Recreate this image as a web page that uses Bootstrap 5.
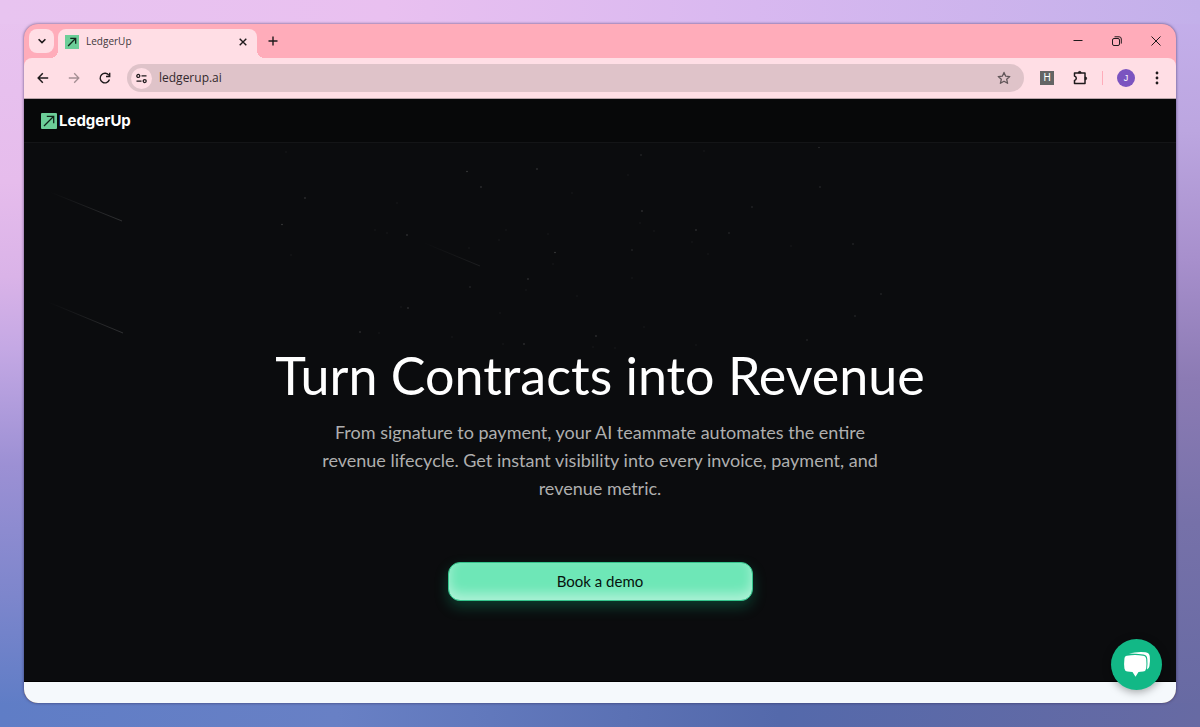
<!DOCTYPE html>
<html lang="en">
<head>
<meta charset="utf-8">
<meta name="viewport" content="width=device-width, initial-scale=1">
<title>LedgerUp</title>
<link href="https://cdn.jsdelivr.net/npm/bootstrap@5.3.0/dist/css/bootstrap.min.css" rel="stylesheet">
<style>
  body {
    font-family: "Open Sans", sans-serif;
    background:
      linear-gradient(90deg, #e8c4f0 0%, #e9c0f0 32%, #d8b8f0 63%, #c3b0ea 100%) top / 100% 24px no-repeat,
      linear-gradient(90deg, #5f7dc6 0%, #6880c5 28%, #5469ab 65%, #676aa3 100%) bottom / 100% 24px no-repeat,
      linear-gradient(180deg, #e8c4f0 0%, #e6bcec 25%, #dab3e8 38%, #c4a8e4 48%, #9c90d4 64%, #7d86cc 82%, #5f7dc6 97%) left / 50% 100% no-repeat,
      linear-gradient(180deg, #c5b0ec 0%, #bca6e0 18%, #a78fcc 36%, #8c7bb4 52%, #7671a9 72%, #676aa3 97%) right / 50% 100% no-repeat;
  }
  .browser { border-radius: 14px; box-shadow: 0 0 3px rgba(40, 30, 70, .7); background: #ffacba; }
  .plain { background: none; border: 0; padding: 0; line-height: 0; color: #1f1a1c; }
  .tab-strip { padding: 5px 8px 0 5px; height: 34px; gap: 4px; }
  .tab-menu { width: 25px; height: 24px; border-radius: 8px; background: #ffdee5; }
  .page-tab { width: 199px; height: 29px; border-radius: 8px 8px 0 0; background: #ffdee5; color: #40373a; font-size: 10px; padding: 0 8px 4px 7px; gap: 7px; }
  .page-tab::before, .page-tab::after { content: ""; position: absolute; bottom: 0; width: 8px; height: 8px; }
  .page-tab::before { right: 100%; background: radial-gradient(circle at 0 0, transparent 8px, #ffdee5 8px); }
  .page-tab::after { left: 100%; background: radial-gradient(circle at 100% 0, transparent 8px, #ffdee5 8px); }
  .win-btn { width: 24px; height: 24px; }
  .win-btns { gap: 15px; }
  .tool-row { height: 41px; padding: 0 11px; background: #ffdee5; border-bottom: 1px solid #b9a4a9; border-radius: 8px 8px 0 0; }
  .nav-btns { gap: 15px; margin-right: 14px; }
  .tool-btns { gap: 14px; margin-left: 16px; }
  .address { height: 28px; background: #dfc3c9; padding: 0 12px 0 4px; }
  .site-info { width: 21px; height: 21px; background: #ffdee5; }
  .address input { font-size: 12px; line-height: 16px; color: #33292d; background: none; outline: 0; margin-left: 7px; }
  .ext { width: 14px; height: 14px; background: #646464; color: #fff; font: 10px/14px "Liberation Sans", sans-serif; }
  .split { width: 1px; height: 14px; background: #ffacba; }
  .profile { width: 18px; height: 18px; background: #7b54c0; color: #fff; font: 9px/18px "Liberation Sans", sans-serif; }
  .site { background: #0b0c0e; }
  .site-head { height: 44px; background: #070809; border-bottom: 1px solid #141517; padding: 0 17px; }
  .brand-link { font: 700 15px/20px Inter, sans-serif; color: #fff; gap: 2px; }
  .sky { position: absolute; left: 0; top: 0; width: 100%; }
  .hero { font-family: Lato, sans-serif; padding: 200px 24px 0; border-bottom: 1px solid #000; }
  .hero h1 { font-size: 52px; line-height: 64px; font-weight: 400; color: #fff; margin-bottom: 11px; }
  .hero p { font-size: 18px; line-height: 28px; color: #afafaf; max-width: 576px; margin-bottom: 60px; }
  .demo { width: 305px; max-width: 100%; height: 39px; border-radius: 12px; font-size: 15px; color: #07120d; background: #6ee7b7; border: 1px solid #34c48c; box-shadow: 0 6px 14px rgba(16, 185, 129, .28), inset 0 -6px 12px rgba(255, 255, 255, .45); }
  .next-band { height: 21px; background: #f5f9fc; }
  .chat { position: absolute; right: 14px; bottom: 13px; width: 51px; height: 51px; background: #12b886; box-shadow: 0 2px 8px rgba(0, 0, 0, .35); }
</style>
</head>
<body>
<div class="p-4 min-vh-100 d-flex flex-column">
  <div class="browser position-relative flex-fill overflow-hidden d-flex flex-column">

    <div class="tab-strip d-flex align-items-start">
      <button class="plain tab-menu" type="button" aria-label="Search tabs">
        <svg width="12" height="12" viewBox="0 0 12 12" fill="none" stroke="currentColor" stroke-width="1.6"><path d="M2.6 4.2 6 7.600l3.400-3.400"/></svg>
      </button>
      <div class="page-tab position-relative d-flex align-items-center">
        <svg width="14" height="14" viewBox="0 0 16 16"><path fill="#6cce98" d="M0 0h16v16H0z"/><path d="M3.500 12.500 12 4M6 3.800h6.200V10" fill="none" stroke="#10251a" stroke-width="1.5"/></svg>
        <span class="flex-fill">LedgerUp</span>
        <button class="plain" type="button" aria-label="Close tab">
          <svg width="12" height="12" viewBox="0 0 12 12" fill="none" stroke="currentColor" stroke-width="1.4"><path d="m2.700 2.700 6.600 6.600M9.300 2.700 2.700 9.300"/></svg>
        </button>
      </div>
      <button class="plain win-btn me-auto" type="button" aria-label="New tab">
        <svg width="12" height="12" viewBox="0 0 12 12" fill="none" stroke="currentColor" stroke-width="1.4"><path d="M6 1.500v9M1.500 6h9"/></svg>
      </button>
      <div class="win-btns d-flex">
        <button class="plain win-btn" type="button" aria-label="Minimize"><svg width="12" height="12" viewBox="0 0 12 12" stroke="currentColor"><path d="M1.500 5.500h9"/></svg></button>
        <button class="plain win-btn" type="button" aria-label="Restore"><svg width="12" height="12" viewBox="0 0 12 12" fill="none" stroke="currentColor"><rect x="1.500" y="3.500" width="7" height="7" rx="1.500"/><path d="M3.500 1.800h4.600a2.200 2.200 0 0 1 2.200 2.200v4.600"/></svg></button>
        <button class="plain win-btn" type="button" aria-label="Close"><svg width="12" height="12" viewBox="0 0 12 12" stroke="currentColor"><path d="m1.500 1.500 9 9M10.500 1.500l-9 9"/></svg></button>
      </div>
    </div>

    <div class="tool-row d-flex align-items-center">
      <div class="nav-btns d-flex">
        <button class="plain" type="button" aria-label="Back"><svg width="16" height="16" viewBox="0 0 16 16" fill="none" stroke="currentColor" stroke-width="1.5"><path d="M13.200 8H3.500M7.800 3.300 3.200 8l4.600 4.700"/></svg></button>
        <button class="plain" type="button" aria-label="Forward"><svg width="16" height="16" viewBox="0 0 16 16" fill="none" stroke="#a58f94" stroke-width="1.3"><path d="M2.800 8h9.700M8.200 3.300 12.800 8l-4.600 4.700"/></svg></button>
        <button class="plain" type="button" aria-label="Reload"><svg width="16" height="16" viewBox="0 0 16 16" fill="none" stroke="currentColor" stroke-width="1.4"><path d="M12.500 9.600A4.800 4.800 0 1 1 12 5.400"/><path d="M12.700 2.800v3.700H9"/></svg></button>
      </div>
      <div class="address rounded-pill flex-fill d-flex align-items-center">
        <button class="plain site-info rounded-circle" type="button" aria-label="Site information">
          <svg width="13" height="13" viewBox="0 0 13 13" fill="none" stroke="currentColor" stroke-width="1.3"><circle cx="3.300" cy="3.900" r="1.500"/><path d="M6.500 3.900h5M1.500 9.100h5"/><circle cx="9.700" cy="9.100" r="1.500"/></svg>
        </button>
        <input class="border-0 p-0 flex-fill" type="text" value="ledgerup.ai" aria-label="Address">
        <button class="plain" type="button" aria-label="Bookmark">
          <svg width="16" height="16" viewBox="0 0 16 16" fill="none" stroke="#62575a" stroke-width="1.3" stroke-linejoin="round"><path d="m8 2.400 1.700 3.800 4.100.4-3.100 2.700.9 4L8 11.200l-3.600 2.100.9-4-3.100-2.700 4.100-.4z"/></svg>
        </button>
      </div>
      <div class="tool-btns d-flex align-items-center">
        <button class="plain ext" type="button" aria-label="H extension">H</button>
        <button class="plain ms-1" type="button" aria-label="Extensions">
          <svg width="16" height="16" viewBox="0 0 16 16" fill="none" stroke="currentColor" stroke-width="1.5" stroke-linejoin="round"><path d="M2.500 3h10.500v10.500H2.500v-3q1.800-.5 1.800-2.200T2.500 6z"/><path d="M6.300 2.800a1.400 1.400 0 0 1 2.800 0zM13.200 7a1.400 1.400 0 0 1 0 2.800z" fill="currentColor" stroke-width="1"/></svg>
        </button>
        <span class="split"></span>
        <button class="plain profile rounded-circle" type="button" aria-label="Profile J">J</button>
        <button class="plain" type="button" aria-label="Menu"><svg width="16" height="16" viewBox="0 0 16 16" fill="currentColor"><circle cx="8" cy="3" r="1.400"/><circle cx="8" cy="8" r="1.400"/><circle cx="8" cy="13" r="1.400"/></svg></button>
      </div>
    </div>

    <div class="site flex-fill d-flex flex-column">
      <header class="site-head d-flex align-items-center">
        <a class="brand-link d-flex align-items-center text-decoration-none" href="#">
          <svg width="16" height="16" viewBox="0 0 16 16"><rect width="16" height="16" rx="1" fill="#6cce98"/><path d="M3 13 12.500 3.500M5.800 3.400h6.900v6.900" fill="none" stroke="#10251a" stroke-width="1.3"/></svg>
          LedgerUp
        </a>
      </header>
      <main class="hero position-relative flex-fill text-center">
        <svg class="sky" viewBox="24 143 1152 210" aria-hidden="true">
          <defs>
            <linearGradient id="trail"><stop offset="0" stop-color="#fff" stop-opacity="0"/><stop offset="1" stop-color="#fff" stop-opacity=".15"/></linearGradient>
          </defs>
          <g stroke="url(#trail)" fill="none">
            <path d="m50 192 72 29"/><path d="m48 302 75 31"/><path d="m422 242 58 24" opacity=".5"/>
          </g>
          <g fill="none" stroke="#fff" stroke-linecap="round" stroke-width="1.6">
            <path stroke-opacity=".22" d="M305 198h0M282 224.500h0M407 235h0M467 171.500h0M481 187h0M408 308h0M360 332h0M537 169h0M642 211h0M696 230h0M555 252.500h0M528 279h0M524 344h0M596 336h0"/>
            <path stroke-opacity=".15" d="M641 155h0M819 147.500h0M820 187h0M752 207h0M729 233h0M632 250h0M853 244h0M881 294h0M855 316h0M807 340h0M470 287h0"/>
            <path stroke-opacity=".07" d="M291 255h0M387 233h0M375 230h0M397 203h0M286 152h0M469 248h0M401 307h0M379 333h0M452 337h0M572 193h0M628 175h0M704 151h0M506 230h0M548 234h0M499 240h0M553 264h0M640 223h0M654 231h0M692 242h0M708 254h0M526 290h0M577 296h0M632 278h0M500 313h0M644 327h0M503 344h0M696 345h0M593 347h0M615 348h0M791 246h0"/>
          </g>
        </svg>
        <h1>Turn Contracts into Revenue</h1>
        <p class="mx-auto">From signature to payment, your AI teammate automates the entire revenue lifecycle. Get instant visibility into every invoice, payment, and revenue metric.</p>
        <button class="demo" type="button">Book a demo</button>
      </main>
      <div class="next-band"></div>
    </div>

    <button class="plain chat rounded-circle" type="button" aria-label="Open chat">
      <svg width="29" height="29" viewBox="0 0 29 29" fill="#fff"><path d="M7 3.600Q15 1.500 23.500 2.300q3.900.4 4.300 4.200.6 5-.4 9.700-.6 2.600-2.400 3.200.8-6 .3-10.500-.4-3.900-3.900-4.300Q14 3.600 7 3.600z"/><path d="M5 5.700q8-1.200 16 0 2.900.4 3.200 3.400.5 4.700 0 9.300-.4 2.700-3.100 3.100-2.700.4-4.600.6L13.500 26.800l-3-4.700q-2.800-.1-5-.5-2.700-.5-3.100-3.200-.6-4.700 0-9.300Q2.500 6.100 5 5.700z"/></svg>
    </button>
  </div>
</div>
<script src="https://cdn.jsdelivr.net/npm/bootstrap@5.3.0/dist/js/bootstrap.bundle.min.js"></script>
</body>
</html>
